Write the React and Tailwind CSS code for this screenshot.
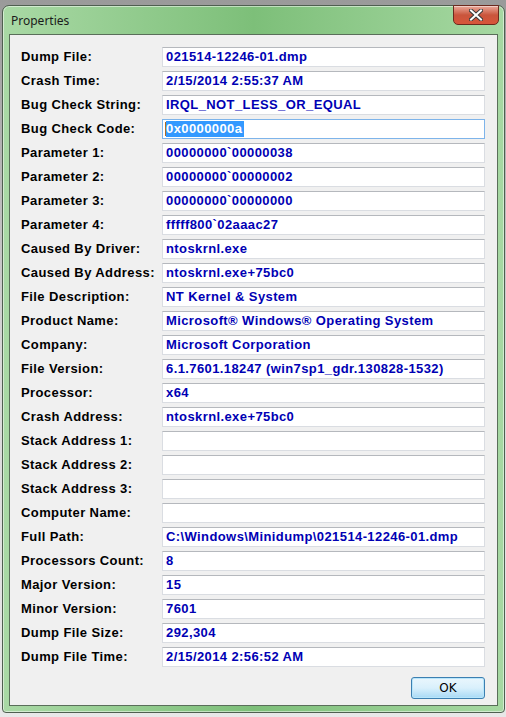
import React from 'react';

// Crash dump properties dialog (Win7 Aero style)
const rows = [
  ['Dump File:', '021514-12246-01.dmp'],
  ['Crash Time:', '2/15/2014 2:55:37 AM'],
  ['Bug Check String:', 'IRQL_NOT_LESS_OR_EQUAL'],
  ['Bug Check Code:', '0x0000000a', true],
  ['Parameter 1:', '00000000`00000038'],
  ['Parameter 2:', '00000000`00000002'],
  ['Parameter 3:', '00000000`00000000'],
  ['Parameter 4:', 'fffff800`02aaac27'],
  ['Caused By Driver:', 'ntoskrnl.exe'],
  ['Caused By Address:', 'ntoskrnl.exe+75bc0'],
  ['File Description:', 'NT Kernel & System'],
  ['Product Name:', 'Microsoft® Windows® Operating System'],
  ['Company:', 'Microsoft Corporation'],
  ['File Version:', '6.1.7601.18247 (win7sp1_gdr.130828-1532)'],
  ['Processor:', 'x64'],
  ['Crash Address:', 'ntoskrnl.exe+75bc0'],
  ['Stack Address 1:', ''],
  ['Stack Address 2:', ''],
  ['Stack Address 3:', ''],
  ['Computer Name:', ''],
  ['Full Path:', 'C:\\Windows\\Minidump\\021514-12246-01.dmp'],
  ['Processors Count:', '8'],
  ['Major Version:', '15'],
  ['Minor Version:', '7601'],
  ['Dump File Size:', '292,304'],
  ['Dump File Time:', '2/15/2014 2:56:52 AM'],
];

function CloseButton() {
  return (
    <div className="w-[46px] h-[20px] -mt-px rounded-b-[5px] border border-[#6b2a1e] bg-gradient-to-b from-[#e9a89a] via-[#c9553c] to-[#d8553a] flex items-center justify-center shadow-[inset_0_1px_0_rgba(255,255,255,0.45)]">
      <svg width="14" height="12" viewBox="0 0 14 12">
        <path d="M2 1.5 L12 10.5 M12 1.5 L2 10.5" stroke="#3a3a3a" strokeWidth="4" strokeLinecap="square" />
        <path d="M2 1.5 L12 10.5 M12 1.5 L2 10.5" stroke="#ffffff" strokeWidth="2" strokeLinecap="square" />
      </svg>
    </div>
  );
}

function Field({ label, value, focused }) {
  return (
    <div className="flex items-center h-[20px]">
      <div className="w-[141px] text-black">{label}</div>
      {focused ? (
        <div className="w-[323px] h-[20px] border border-[#7eb4ea] bg-white flex items-center pl-[2px]">
          <span className="w-px h-[14px] bg-[#b06a20]" />
          <span className="bg-[#3399ff] text-white leading-[16px] pr-[2px]">{value}</span>
        </div>
      ) : (
        <div className="w-[323px] h-[20px] border border-[#dadde2] border-t-[#b5b8bd] bg-white flex items-center pl-[3px] text-[#0000b4] whitespace-nowrap overflow-hidden">
          {value}
        </div>
      )}
    </div>
  );
}

export default function App() {
  return (
    <div className="w-[506px] h-[717px] bg-gradient-to-b from-[#9a9a9a] via-[#d8d8d8] to-[#e8e8e8] overflow-hidden">
      <div className="ml-[2px] mt-[5px] w-[503px] h-[708px] rounded-t-[7px] rounded-b-[4px] border border-[#4f5f50] bg-gradient-to-r from-[#a9d9a5] via-[#7dbf79] to-[#a6d8a2] flex flex-col shadow-[inset_0_0_0_1px_rgba(255,255,255,0.5)]">
        <div className="h-[28px] flex items-start justify-between pl-[8px] pr-[5px]">
          <span className="mt-[7px] text-[12px] leading-[16px] text-[#1b1b1b] font-['Noto_Sans',sans-serif]">Properties</span>
          <CloseButton />
        </div>
        <div className="mx-[6px] h-[672px] border border-[#5a6e5a] bg-[#f0f0f0] pt-[12px] pl-[11px] font-['Liberation_Sans',Arial,sans-serif] font-bold text-[13px] tracking-[0.4px]">
          <div className="flex flex-col gap-[4px]">
            {rows.map(([label, value, focused]) => (
              <Field key={label} label={label} value={value} focused={focused} />
            ))}
          </div>
          <div className="mt-[10px] w-[464px] flex justify-end">
            <button className="w-[74px] h-[22px] rounded-[3px] border border-[#3c7fb1] bg-gradient-to-b from-[#eaf6fd] via-[#d9f0fc] to-[#a7d9f5] shadow-[inset_0_0_0_1px_#b8e6fb] text-[12px] font-normal tracking-normal text-black font-['DejaVu_Sans',sans-serif]">
              OK
            </button>
          </div>
        </div>
      </div>
    </div>
  );
}
